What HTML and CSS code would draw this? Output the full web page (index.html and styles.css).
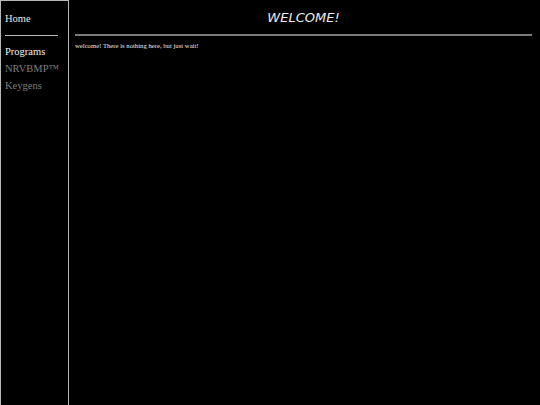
FILE: index.html
```html
<!DOCTYPE html>
<html>
<head>
<meta charset="utf-8">
<link rel="stylesheet" href="styles.css">
</head>
<body>
<div class="page">
  <nav class="sidebar">
    <div class="nav-item home">Home</div>
    <hr class="nav-rule">
    <div class="nav-item active">Programs</div>
    <div class="nav-item dim">NRVBMP™</div>
    <div class="nav-item dim">Keygens</div>
  </nav>
  <main class="content">
    <h1 class="title">WELCOME!</h1>
    <hr class="title-rule">
    <p class="text">welcome! There is nothing here, but just wait!</p>
  </main>
</div>
</body>
</html>
```
FILE: styles.css
```css
html, body {
  margin: 0;
  padding: 0;
  background: #000;
  height: 100%;
}
.page {
  display: flex;
  height: 405px;
}
.sidebar {
  width: 69px;
  border: 1px solid #b8b8b8;
  border-bottom: none;
  padding: 0 0 0 4px;
  box-sizing: border-box;
  flex: none;
  font-family: "Liberation Serif", serif;
  font-size: 10.5px;
  color: #e8e8e8;
}
.nav-item {
  line-height: 17px;
  height: 17px;
}
.home {
  margin-top: 9px;
}
.nav-rule {
  border: none;
  border-top: 1px solid #bbb;
  width: 53px;
  margin: 8px 0 7px 0;
}
.active { color: #f0f0f0; }
.dim { color: #7e7e7e; }
.content {
  flex: 1;
  padding: 0 8px 0 6px;
}
.title {
  margin: 0;
  padding-top: 10px;
  height: 25px;
  box-sizing: border-box;
  text-align: center;
  font-family: "DejaVu Sans", sans-serif;
  font-style: italic;
  font-weight: normal;
  font-size: 13px;
  line-height: 16px;
  color: #ececec;
}
.title-rule {
  border: none;
  border-top: 2px solid #7a7a7a;
  margin: 9px 0 0 0;
}
.text {
  margin: 6px 0 0 0;
  font-family: "Liberation Serif", serif;
  font-size: 6.7px;
  color: #e8e8e8;
}
```
